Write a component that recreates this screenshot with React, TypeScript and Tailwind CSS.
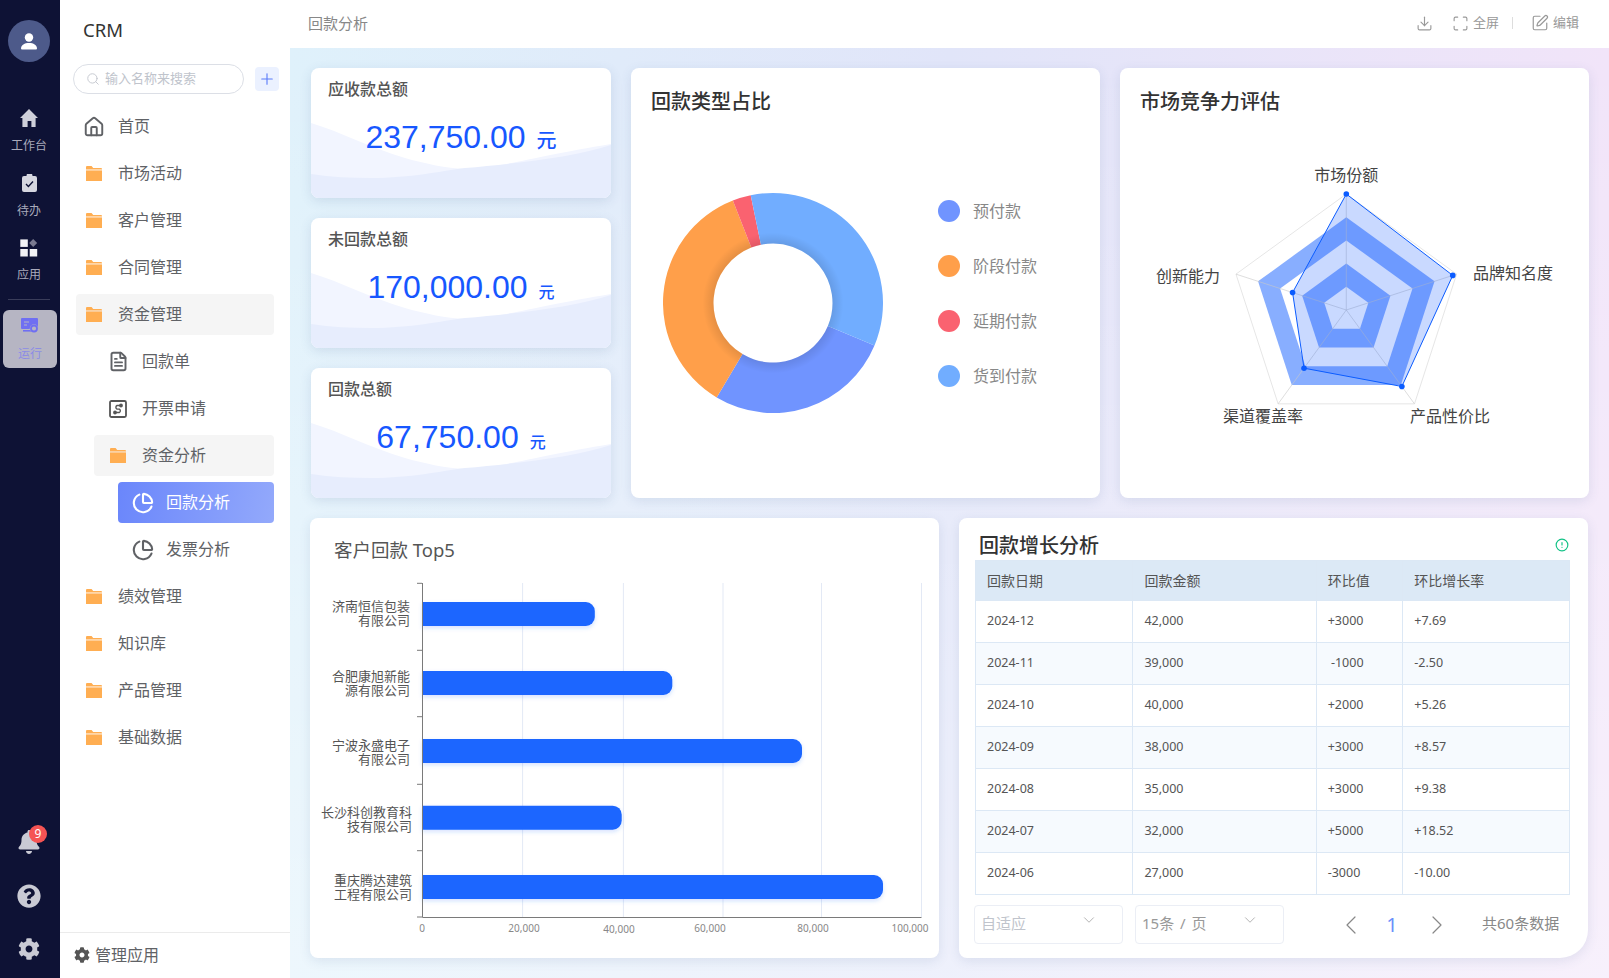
import { ChartPie, ChevronDown, ChevronLeft, ChevronRight, CircleAlert, Download, FileText, House, Maximize, Plus, Search, SquarePen } from 'lucide-react';
import { FaBell, FaCog, FaQuestionCircle } from 'react-icons/fa';
import type { ReactNode } from 'react';

const Folder = () => (
  <svg width="16" height="15" viewBox="0 0 16 15" className="shrink-0">
    <path d="M0 1a1 1 0 0 1 1-1h4.6l1.6 2H15a1 1 0 0 1 1 1v.4H0z" fill="#ffae52" />
    <path d="M0 4.4h16V15H0z" fill="#ffae52" />
  </svg>
);

const Invoice = () => (
  <svg width="18" height="18" viewBox="0 0 18 18" fill="none" stroke="#555" strokeWidth="1.8" className="shrink-0">
    <rect x="1" y="1" width="16" height="16" rx="1.5" />
    <path d="M12 5.5H8a2 2 0 0 0 0 3.6h2.4a2 2 0 0 1 0 3.4H6" strokeWidth="1.4" />
    <circle cx="12" cy="5.5" r="1" fill="#555" />
    <circle cx="6" cy="12.5" r="1" fill="#555" />
  </svg>
);

type MenuRow = { label: string; level: number; icon: ReactNode; state?: 'open' | 'active' };

const menu: MenuRow[] = [
  { label: '首页', level: 1, icon: <House size={22} strokeWidth={2.1} className="shrink-0" /> },
  { label: '市场活动', level: 1, icon: <Folder /> },
  { label: '客户管理', level: 1, icon: <Folder /> },
  { label: '合同管理', level: 1, icon: <Folder /> },
  { label: '资金管理', level: 1, icon: <Folder />, state: 'open' },
  { label: '回款单', level: 2, icon: <FileText size={21} strokeWidth={2.2} className="shrink-0" /> },
  { label: '开票申请', level: 2, icon: <Invoice /> },
  { label: '资金分析', level: 2, icon: <Folder />, state: 'open' },
  { label: '回款分析', level: 3, icon: <ChartPie size={22} strokeWidth={2.3} className="shrink-0" />, state: 'active' },
  { label: '发票分析', level: 3, icon: <ChartPie size={22} strokeWidth={2.3} className="shrink-0" /> },
  { label: '绩效管理', level: 1, icon: <Folder /> },
  { label: '知识库', level: 1, icon: <Folder /> },
  { label: '产品管理', level: 1, icon: <Folder /> },
  { label: '基础数据', level: 1, icon: <Folder /> },
];

function Rail() {
  return (
    <aside className="flex h-full w-[60px] shrink-0 flex-col items-center bg-[#0e1235] pr-[2px] text-[12px] text-[#a9aabb]">
      <div className="mt-5 flex h-[42px] w-[42px] items-center justify-center rounded-full bg-[#4d5a8a]">
        <svg width="18" height="18" viewBox="0 0 18 18" fill="#fff">
          <circle cx="9" cy="5.5" r="4.2" />
          <path d="M1 16.5c0-3.6 3.6-5.6 8-5.6s8 2 8 5.6c0 .6-.4.9-1 .9H2c-.6 0-1-.3-1-.9z" />
        </svg>
      </div>
      <svg width="18" height="18" viewBox="0 0 18 18" fill="#cfd0da" className="mt-[47px]">
        <path d="M9 0l9 9h-2.4v9h-4.2v-6H7.6v6H2.4V9H0z" />
      </svg>
      <span className="mt-[11px] leading-4">工作台</span>
      <svg width="15" height="18" viewBox="0 0 15 18" className="mt-5">
        <path d="M2 2h2.5a3 3 0 0 1 6 0H13a2 2 0 0 1 2 2v12a2 2 0 0 1-2 2H2a2 2 0 0 1-2-2V4a2 2 0 0 1 2-2z" fill="#d6d7e0" />
        <path d="M4 10l2.4 2.4L11 7.6" stroke="#0e1235" strokeWidth="1.4" fill="none" />
      </svg>
      <span className="mt-[11px] leading-4">待办</span>
      <svg width="18" height="18" viewBox="0 0 18 18" className="mt-5">
        <rect x="0.3" y="0.4" width="7.5" height="7.5" fill="#f2f2f5" />
        <path d="M13.2 0l4 4-4 4-4-4z" fill="#7a7a90" />
        <rect x="0.3" y="10" width="7.5" height="7.5" fill="#f2f2f5" />
        <rect x="9.7" y="10" width="7.5" height="7.5" fill="#f2f2f5" />
      </svg>
      <span className="mt-[10px] leading-4">应用</span>
      <div className="mt-4 h-px w-[42px] bg-[#3a3d5a]" />
      <div className="ml-[2px] mt-[10px] flex h-[58px] w-[54px] flex-col items-center rounded-md bg-[#b6b5c3] pt-2 text-[#8c8ce6]">
        <svg width="18" height="16" viewBox="0 0 18 16">
          <rect x="0" y="0" width="17" height="11" rx="1" fill="#6f6ff2" />
          <rect x="2" y="12" width="8" height="1.6" fill="#6f6ff2" />
          <path d="M3 4h5M3 7h3" stroke="#b6b5c3" strokeWidth="1" />
          <circle cx="13" cy="10.5" r="4.2" fill="#b6b5c3" />
          <circle cx="13" cy="10.5" r="3" fill="none" stroke="#6f6ff2" strokeWidth="1.8" />
        </svg>
        <span className="mt-[12px] leading-4">运行</span>
      </div>
      <div className="mt-auto flex flex-col items-center pb-[18px] text-[#c9cad4]">
        <div className="relative">
          <FaBell size={24} />
          <span className="absolute -right-[6px] -top-[5px] flex h-[18px] w-[18px] items-center justify-center rounded-full bg-[#f55454] text-[12px] leading-none text-white">9</span>
        </div>
        <FaQuestionCircle size={24} className="mt-[30px]" />
        <FaCog size={22} className="mt-[30px]" />
      </div>
    </aside>
  );
}

function Sidebar() {
  return (
    <aside className="flex h-full w-[230px] shrink-0 flex-col bg-white text-[16px] text-[#606266]">
      <div className="ml-[23px] pt-4 text-[18.5px] leading-7 text-[#333]">CRM</div>
      <div className="mt-5 flex items-center pl-[13px]">
        <div className="flex h-[30px] w-[171px] items-center rounded-full border border-[#dcdfe6] pl-[12px] text-[13px] text-[#c0c4cc]">
          <Search size={14} strokeWidth={1.5} />
          <span className="ml-[5px]">输入名称来搜索</span>
        </div>
        <div className="ml-[11px] flex h-6 w-6 items-center justify-center rounded bg-[#ebf1ff] text-[#5b7cf9]">
          <Plus size={18} strokeWidth={1.5} />
        </div>
      </div>
      <nav className="mt-3 flex-1">
        {menu.map(({ label, level, icon, state }) => (
          <div
            key={label + level}
            className={`mb-[6px] mr-4 flex h-[41px] items-center rounded ${
              level === 1 ? 'ml-4 gap-4 pl-[10px]' : level === 2 ? 'ml-[34px] gap-4 pl-4' : 'ml-[58px] gap-[14px] pl-4'
            } ${state === 'open' ? 'bg-[#f5f5f5]' : ''} ${
              state === 'active' ? 'bg-[linear-gradient(100deg,#6a86fb,#93a9fb)] text-white' : ''
            }`}
          >
            <span className={`flex shrink-0 justify-center ${level === 3 ? 'w-[18px]' : 'w-4'}`}>{icon}</span>
            <span className="-mt-px">{label}</span>
          </div>
        ))}
      </nav>
      <div className="flex h-[46px] items-center gap-[5px] border-t border-[#ebebeb] pb-[2px] pl-[14px]">
        <FaCog size={16} className="text-[#555]" />
        管理应用
      </div>
    </aside>
  );
}

function Header() {
  return (
    <header className="flex h-12 shrink-0 items-center bg-white pb-[2px] pl-[18px] pr-[30px] text-[#999]">
      <span className="text-[15px] text-[#888]">回款分析</span>
      <div className="ml-auto flex items-center text-[13px]">
        <Download size={17} strokeWidth={1.6} />
        <Maximize size={17} strokeWidth={1.6} className="ml-[19px]" />
        <span className="ml-1">全屏</span>
        <span className="ml-[13px] h-3 w-px bg-[#ddd]" />
        <SquarePen size={18} strokeWidth={1.6} className="ml-[18px]" />
        <span className="ml-1">编辑</span>
      </div>
    </header>
  );
}

const totals = [
  { label: '应收款总额', value: '237,750.00', unit: 'text-[20px]' },
  { label: '未回款总额', value: '170,000.00', unit: 'text-[16px]' },
  { label: '回款总额', value: '67,750.00', unit: 'text-[16px]' },
];

function TotalCard({ label, value, unit }: { label: string; value: string; unit: string }) {
  return (
    <div className="relative h-[130px] overflow-hidden rounded-lg bg-white shadow-[0_3px_12px_rgba(60,90,140,0.14)]">
      <svg viewBox="0 0 300 130" className="absolute inset-0 h-full w-full">
        <path d="M0 55C30 64 60 80 94 90C115 96 135 100 154 101C190 100 225 88 300 76V130H0Z" fill="#f2f5ff" />
        <path d="M0 106C20 109 40 110 60 110C100 110 130 103 154 100C200 96 260 90 300 77V130H0Z" fill="#e7edfd" />
      </svg>
      <div className="relative">
        <div className="pl-[17px] pt-[9px] text-[16px] font-medium leading-6 text-[#555]">{label}</div>
        <div className="mt-4 flex items-baseline justify-center gap-[11px] text-[#1757ff]">
          <span className="font-['Liberation_Sans',sans-serif] text-[32px] leading-10">{value}</span>
          <span className={`font-medium ${unit}`}>元</span>
        </div>
      </div>
    </div>
  );
}

const donut = [
  { label: '预付款', color: '#7094ff', from: 112.7, to: 210.8 },
  { label: '阶段付款', color: '#ff9f4a', from: 210.8, to: 338.6 },
  { label: '延期付款', color: '#fa6270', from: 338.6, to: 348.3 },
  { label: '货到付款', color: '#71adff', from: 348.3, to: 472.7 },
];

function arc(from: number, to: number) {
  const pt = (a: number, r: number) => {
    const t = (a * Math.PI) / 180;
    return `${(110 + r * Math.sin(t)).toFixed(2)} ${(110 - r * Math.cos(t)).toFixed(2)}`;
  };
  const large = to - from > 180 ? 1 : 0;
  return `M${pt(from, 110)}A110 110 0 ${large} 1 ${pt(to, 110)}L${pt(to, 59.5)}A59.5 59.5 0 ${large} 0 ${pt(from, 59.5)}Z`;
}

function DonutCard() {
  return (
    <div className="h-full w-[469px] rounded-lg bg-white shadow-[0_3px_12px_rgba(60,90,140,0.12)]">
      <div className="pl-5 pt-5 text-[20px] font-medium leading-7 text-[#333]">回款类型占比</div>
      <div className="flex items-start pl-8 pt-[77px]">
        <svg width="220" height="220" viewBox="0 0 220 220" className="shrink-0">
          <defs>
            <radialGradient id="hole">
              <stop offset="0.54" stopColor="#000" stopOpacity="0.1" />
              <stop offset="0.64" stopColor="#000" stopOpacity="0" />
            </radialGradient>
          </defs>
          {donut.map((d) => (
            <path key={d.label} d={arc(d.from, d.to)} fill={d.color} />
          ))}
          <path d="M0 110a110 110 0 1 0 220 0a110 110 0 1 0-220 0zM50.5 110a59.5 59.5 0 1 1 119 0a59.5 59.5 0 1 1-119 0z" fill="url(#hole)" fillRule="evenodd" />
        </svg>
        <ul className="ml-[55px] mt-[7px] flex flex-col gap-[33px] text-[16px] text-[#888]">
          {donut.map((d) => (
            <li key={d.label} className="flex h-[22px] items-center gap-[13px]">
              <span className="h-[22px] w-[22px] rounded-full" style={{ background: d.color }} />
              {d.label}
            </li>
          ))}
        </ul>
      </div>
    </div>
  );
}

const cx = 226.3;
const cy = 194;
const R = 116;

function poly(scale: number[] | number) {
  return [0, 1, 2, 3, 4]
    .map((i) => {
      const s = typeof scale === 'number' ? scale : scale[i];
      const t = (i * 72 * Math.PI) / 180;
      return `${(cx + R * s * Math.sin(t)).toFixed(2)},${(cy - R * s * Math.cos(t)).toFixed(2)}`;
    })
    .join(' ');
}

const radarValues = [1, 0.965, 0.815, 0.62, 0.487];
const radarLabels = [
  { t: '市场份额', x: 226.3, y: 65, a: 'middle' },
  { t: '品牌知名度', x: 353, y: 163, a: 'start' },
  { t: '产品性价比', x: 290, y: 306, a: 'start' },
  { t: '渠道覆盖率', x: 103, y: 306, a: 'start' },
  { t: '创新能力', x: 36, y: 166, a: 'start' },
];

function RadarCard() {
  const points = poly(radarValues).split(' ');
  return (
    <div className="h-full w-[469px] rounded-lg bg-white shadow-[0_3px_12px_rgba(60,90,140,0.12)]">
      <div className="pl-5 pt-5 text-[20px] font-medium leading-7 text-[#333]">市场竞争力评估</div>
      <svg width="469" height="382" viewBox="0 0 469 382" className="block">
        <polygon points={poly(1)} fill="#fff" stroke="#e6e6e6" />
        <polygon points={poly(0.8)} fill="#88aeff" />
        <polygon points={poly(0.6)} fill="#fff" />
        <polygon points={poly(0.4)} fill="#88aeff" />
        <polygon points={poly(0.2)} fill="#fff" />
        {poly(1).split(' ').map((p) => {
          const [x, y] = p.split(',');
          return <line key={p} x1={cx} y1={cy} x2={x} y2={y} stroke="#c8c8c8" strokeOpacity="0.6" />;
        })}
        <polygon points={poly(radarValues)} fill="rgba(23,92,255,0.23)" stroke="#0b5cff" />
        {points.map((p) => {
          const [x, y] = p.split(',');
          return <circle key={p} cx={x} cy={y} r="2.8" fill="#0b5cff" />;
        })}
        {radarLabels.map((l) => (
          <text key={l.t} x={l.x} y={l.y} textAnchor={l.a as 'start' | 'middle'} fontSize="16" fill="#444">
            {l.t}
          </text>
        ))}
      </svg>
    </div>
  );
}

const bars = [
  { lines: ['济南恒信包装', '有限公司'], y: 38, end: 284.8, lx: 100, ly: [42.3, 56.7] },
  { lines: ['合肥康旭新能', '源有限公司'], y: 107, end: 362.3, lx: 100, ly: [112.7, 126.7] },
  { lines: ['宁波永盛电子', '有限公司'], y: 175, end: 492, lx: 100, ly: [181, 195] },
  { lines: ['长沙科创教育科', '技有限公司'], y: 241.7, end: 311.7, lx: 102, ly: [248.3, 262.3] },
  { lines: ['重庆腾达建筑', '工程有限公司'], y: 311, end: 573, lx: 102, ly: [316.3, 330.3] },
];

const ticksY = [19.3, 86.3, 152.7, 220.3, 286.7, 353];
const gridX = [212.6, 313.4, 413, 511.5, 611.5];
const tickLabels = [
  { t: '0', x: 112, y: 368 },
  { t: '20,000', x: 214, y: 368 },
  { t: '40,000', x: 309, y: 369 },
  { t: '60,000', x: 400, y: 368 },
  { t: '80,000', x: 503, y: 368 },
  { t: '100,000', x: 600, y: 368 },
];

function BarCard() {
  return (
    <div className="-ml-px h-full w-[629px] rounded-lg bg-white shadow-[0_3px_12px_rgba(60,90,140,0.12)]">
      <div className="pb-px pl-6 pt-[19px] text-[18.5px] leading-[26px] text-[#555]">客户回款 Top5</div>
      <svg width="629" height="394" viewBox="0 0 629 394" className="block">
        <defs>
          <filter id="bar" x="-5%" y="-30%" width="110%" height="170%">
            <feDropShadow dx="0" dy="2" stdDeviation="2" floodColor="#1a66ff" floodOpacity="0.2" />
          </filter>
        </defs>
        {gridX.map((x) => (
          <line key={x} x1={x} y1="19" x2={x} y2="353" stroke="#e3e9f5" />
        ))}
        {bars.map((b) => (
          <path
            key={b.y}
            d={`M112.5 ${b.y}H${b.end - 9}a9 9 0 0 1 9 9v6a9 9 0 0 1-9 9H112.5z`}
            fill="#1a66ff"
            filter="url(#bar)"
          />
        ))}
        <path d="M112.5 19V353.5H611.5" stroke="#7a7a7a" fill="none" />
        {ticksY.map((y) => (
          <line key={y} x1="107" y1={y} x2="112" y2={y} stroke="#7a7a7a" />
        ))}
        {bars.map((b) => (
          <text key={b.y} textAnchor="end" fontSize="13" fill="#555">
            {b.lines.map((line, i) => (
              <tspan key={line} x={b.lx} y={b.ly[i] + 4.5}>
                {line}
              </tspan>
            ))}
          </text>
        ))}
        {tickLabels.map((t) => (
          <text key={t.t} x={t.x} y={t.y} textAnchor="middle" fontSize="10" fill="#888">
            {t.t}
          </text>
        ))}
      </svg>
    </div>
  );
}

const rows = [
  ['2024-12', '42,000', '+3000', '+7.69'],
  ['2024-11', '39,000', '\u00a0-1000', '-2.50'],
  ['2024-10', '40,000', '+2000', '+5.26'],
  ['2024-09', '38,000', '+3000', '+8.57'],
  ['2024-08', '35,000', '+3000', '+9.38'],
  ['2024-07', '32,000', '+5000', '+18.52'],
  ['2024-06', '27,000', '-3000', '-10.00'],
];

function TableCard() {
  return (
    <div className="h-full w-[629px] rounded-lg rounded-br-[28px] bg-white shadow-[0_3px_12px_rgba(60,90,140,0.12)]">
      <div className="flex h-[42px] items-start justify-between pl-5 pr-[19px] pt-[13px]">
        <span className="text-[20px] font-medium leading-[29px] text-[#333]">回款增长分析</span>
        <CircleAlert size={14} strokeWidth={2} className="mt-[7px] text-[#12c286]" />
      </div>
      <table className="ml-4 w-[595px] table-fixed border-collapse text-[12.5px] text-[#555]">
        <colgroup>
          <col className="w-[157.4px]" />
          <col className="w-[183.3px]" />
          <col className="w-[86.6px]" />
          <col />
        </colgroup>
        <thead>
          <tr className="h-10 bg-[#dce9f6] text-left text-[14px]">
            {['回款日期', '回款金额', '环比值', '环比增长率'].map((h) => (
              <th key={h} className="border border-[#dce8f5] pl-[11px] font-normal">
                {h}
              </th>
            ))}
          </tr>
        </thead>
        <tbody>
          {rows.map((row, i) => (
            <tr key={row[0]} className={`h-[42px] ${i % 2 ? 'bg-[#f6fafe]' : 'bg-white'}`}>
              {row.map((cell, j) => (
                <td key={j} className="border border-[#dce8f5] pl-[11px]">
                  {cell}
                </td>
              ))}
            </tr>
          ))}
        </tbody>
      </table>
      <div className="ml-[15px] mt-[10px] flex items-center text-[15px]">
        <div className="flex h-[39px] w-[149px] items-center justify-between rounded border border-[#ebeef5] pb-[2px] pl-[6px] pr-[24px] text-[#c0c4cc]">
          自适应
          <ChevronDown size={18} strokeWidth={1} className="-mt-[8px] text-[#999]" />
        </div>
        <div className="ml-3 flex h-[39px] w-[149px] items-center justify-between rounded border border-[#ebeef5] pb-[2px] pl-[6px] pr-[24px] text-[#999]">
          <span className="[word-spacing:2px]">15条 / 页</span>
          <ChevronDown size={18} strokeWidth={1} className="-mt-[8px] text-[#999]" />
        </div>
        <ChevronLeft size={32} strokeWidth={0.9} className="ml-[51px] text-[#888]" />
        <span className="ml-[15px] w-5 text-center text-[20px] text-[#6b8ffb]">1</span>
        <ChevronRight size={32} strokeWidth={0.9} className="ml-[19px] text-[#888]" />
        <span className="ml-[29px] pb-[2px] text-[#888]">共60条数据</span>
      </div>
    </div>
  );
}

export default function App() {
  return (
    <div className="flex h-screen w-full overflow-hidden font-['Noto_Sans','Noto_Sans_CJK_SC',sans-serif]">
      <Rail />
      <Sidebar />
      <div className="flex min-w-0 flex-1 flex-col">
        <Header />
        <main className="flex flex-1 flex-col gap-5 bg-[linear-gradient(180deg,rgba(255,255,255,0)_0%,rgba(255,255,255,0.45)_100%),linear-gradient(90deg,#dff1fb,#e1e5f9_50%,#f1e4f9)] pb-5 pl-[21px] pr-5 pt-5">
          <div className="flex h-[430px] gap-5">
            <div className="flex w-[300px] flex-col gap-5">
              {totals.map((t) => (
                <TotalCard key={t.label} {...t} />
              ))}
            </div>
            <DonutCard />
            <RadarCard />
          </div>
          <div className="flex h-[440px] gap-5">
            <BarCard />
            <TableCard />
          </div>
        </main>
      </div>
    </div>
  );
}
